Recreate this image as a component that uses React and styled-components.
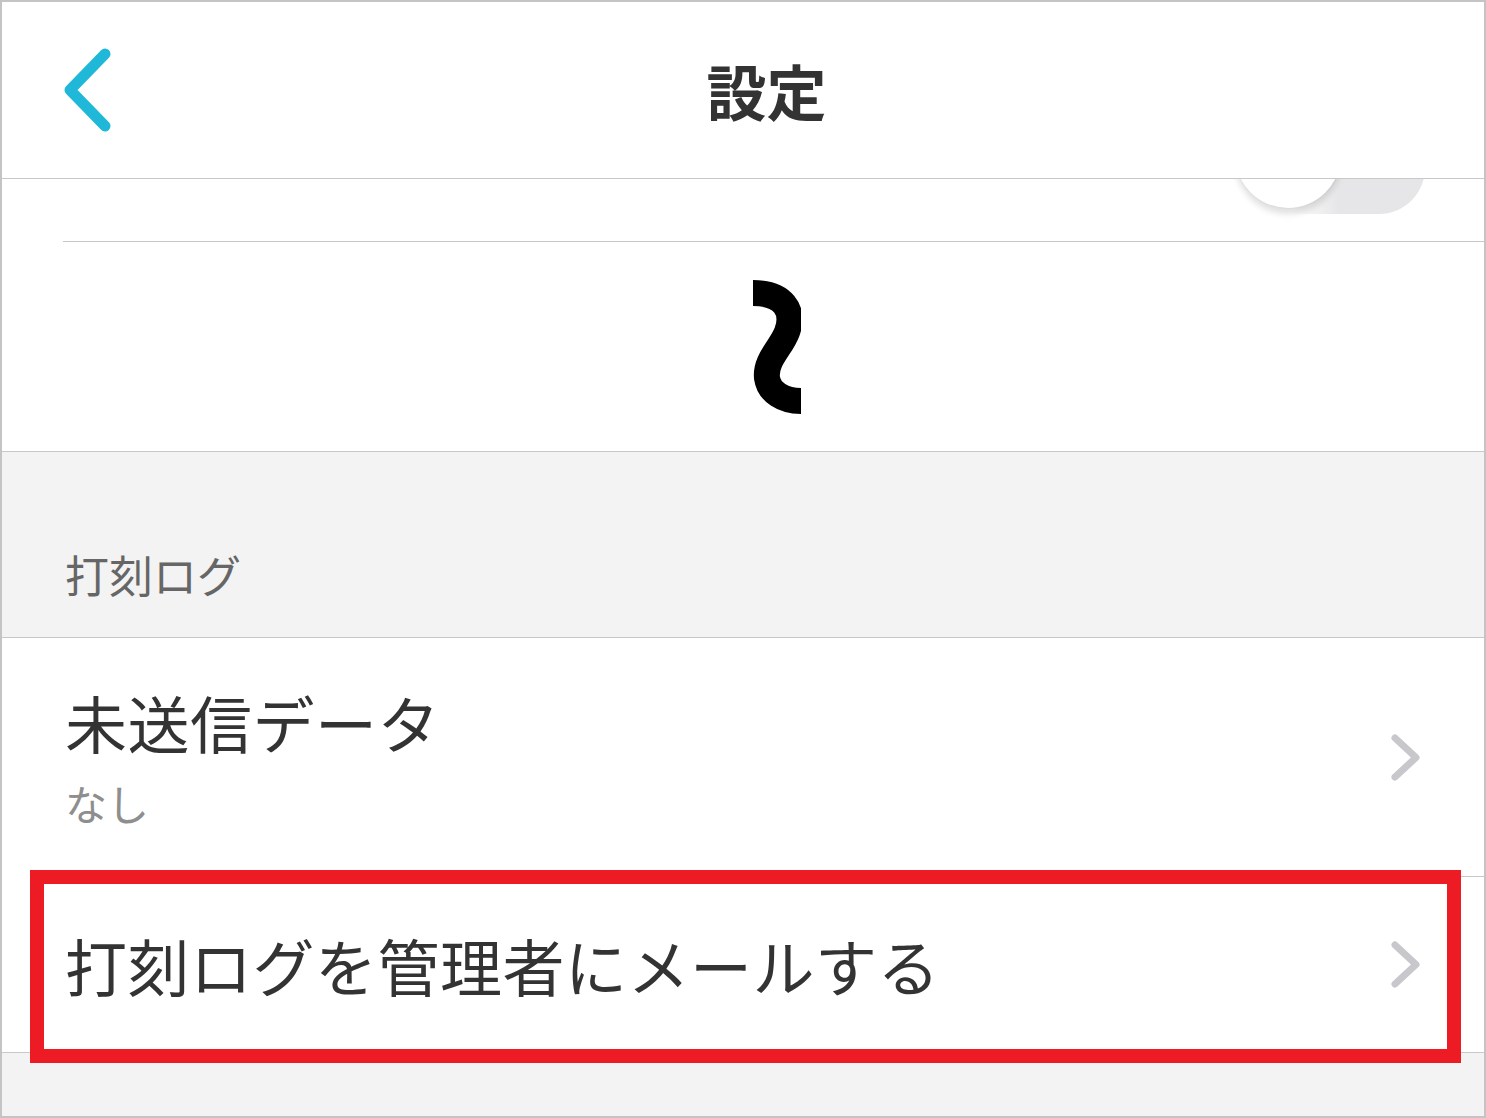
import React from "react";
import styled, { createGlobalStyle } from "styled-components";

const GlobalStyle = createGlobalStyle`
  html, body {
    margin: 0;
    padding: 0;
    background: #ffffff;
  }
  * {
    box-sizing: border-box;
  }
`;

const Frame = styled.div`
  position: relative;
  width: 1486px;
  height: 1118px;
  border: 2px solid #c4c4c4;
  background: #f3f3f3;
  overflow: hidden;
  font-family: "Noto Sans CJK JP", "Noto Sans", sans-serif;
  color: #333333;
`;

const Header = styled.header`
  display: flex;
  align-items: center;
  height: 177px;
  padding: 0 62px 0 61px;
  background: #ffffff;
  border-bottom: 1px solid #c8c8c8;
`;

const BackButton = styled.button`
  display: flex;
  width: 48px;
  height: 84px;
  padding: 0;
  margin: 0 0 0;
  border: none;
  background: none;
  cursor: pointer;
`;

const Title = styled.h1`
  flex: 1;
  margin: 0;
  text-align: center;
  font-size: 60px;
  line-height: 1;
  font-weight: 700;
  color: #333333;
`;

const ListBlock = styled.div`
  background: #ffffff;
`;

const ClippedRow = styled.div`
  display: flex;
  justify-content: flex-end;
  align-items: flex-end;
  height: 63px;
  margin-left: 61px;
  padding: 0 59px 27px 0;
  overflow: hidden;
  border-bottom: 1px solid #c8c8c8;
`;

const SwitchTrack = styled.div`
  position: relative;
  flex-shrink: 0;
  width: 192px;
  height: 92px;
  border-radius: 46px;
  background: linear-gradient(90deg, #ffffff 0%, #ffffff 30%, #e6e6e8 55%, #e6e6e8 100%);
`;

const SwitchKnob = styled.div`
  position: absolute;
  left: 2px;
  bottom: 6px;
  width: 106px;
  height: 106px;
  border-radius: 50%;
  background: #ffffff;
  box-shadow: 0 6px 6px rgba(0, 0, 0, 0.12), 0 0 2px rgba(0, 0, 0, 0.08);
`;

const WaveArea = styled.div`
  height: 210px;
  padding: 38px 0 0 749px;
  border-bottom: 1px solid #c8c8c8;
`;

const SectionHeader = styled.div`
  height: 186px;
  padding: 100px 0 0 63px;
  font-size: 44px;
  line-height: 1;
  color: #666666;
  border-bottom: 1px solid #c8c8c8;
`;

const Group = styled.div`
  background: #ffffff;
  border-bottom: 1px solid #c8c8c8;
`;

const Row = styled.div`
  display: flex;
  align-items: center;
  margin-left: 61px;
  padding-right: 63px;
  min-height: ${(p) => p.$height}px;
  border-bottom: ${(p) => (p.$last ? "none" : "1px solid #c8c8c8")};
`;

const RowText = styled.div`
  flex: 1;
  display: flex;
  flex-direction: column;
  padding-left: 2px;
`;

const RowTitle = styled.div`
  font-size: 62px;
  line-height: 1;
  color: #333333;
  letter-spacing: 0.5px;
`;

const RowSub = styled.div`
  margin-top: 29px;
  font-size: 42px;
  line-height: 1;
  color: #8e8e8e;
`;

const Chevron = styled.svg`
  flex-shrink: 0;
  width: 30px;
  height: 47px;
`;

const Highlight = styled.div`
  position: absolute;
  left: 28px;
  top: 868px;
  width: 1431px;
  height: 193px;
  border: 14px solid #ed1c24;
  pointer-events: none;
`;

function RowChevron() {
  return (
    <Chevron viewBox="0 0 30 47">
      <path
        d="M4 4 L25 23.5 L4 43"
        fill="none"
        stroke="#c7c7cc"
        strokeWidth="7"
        strokeLinecap="round"
        strokeLinejoin="round"
      />
    </Chevron>
  );
}

export default function App() {
  return (
    <>
      <GlobalStyle />
      <Frame>
        <Header>
          <BackButton aria-label="戻る">
            <svg width="48" height="84" viewBox="0 0 48 84">
              <path
                d="M42 6 L7 42 L42 78"
                fill="none"
                stroke="#1fb8d9"
                strokeWidth="11"
                strokeLinecap="round"
                strokeLinejoin="round"
              />
            </svg>
          </BackButton>
          <Title>設定</Title>
        </Header>

        <ListBlock>
          <ClippedRow>
            <SwitchTrack>
              <SwitchKnob />
            </SwitchTrack>
          </ClippedRow>

          <WaveArea>
            {/* 省略マーク */}
            <svg width="50" height="136" viewBox="0 0 50 136">
              <path
                d="M2 13 C32 13 44 30 36 52 C30 68 14 80 16 98 C18 112 32 121 50 121"
                fill="none"
                stroke="#000000"
                strokeWidth="26"
              />
            </svg>
          </WaveArea>
        </ListBlock>

        <SectionHeader>打刻ログ</SectionHeader>

        <Group>
          <Row $height={239}>
            <RowText>
              <RowTitle>未送信データ</RowTitle>
              <RowSub>なし</RowSub>
            </RowText>
            <RowChevron />
          </Row>
          <Row $height={175} $last>
            <RowText>
              <RowTitle>打刻ログを管理者にメールする</RowTitle>
            </RowText>
            <RowChevron />
          </Row>
        </Group>

        <Highlight />
      </Frame>
    </>
  );
}
